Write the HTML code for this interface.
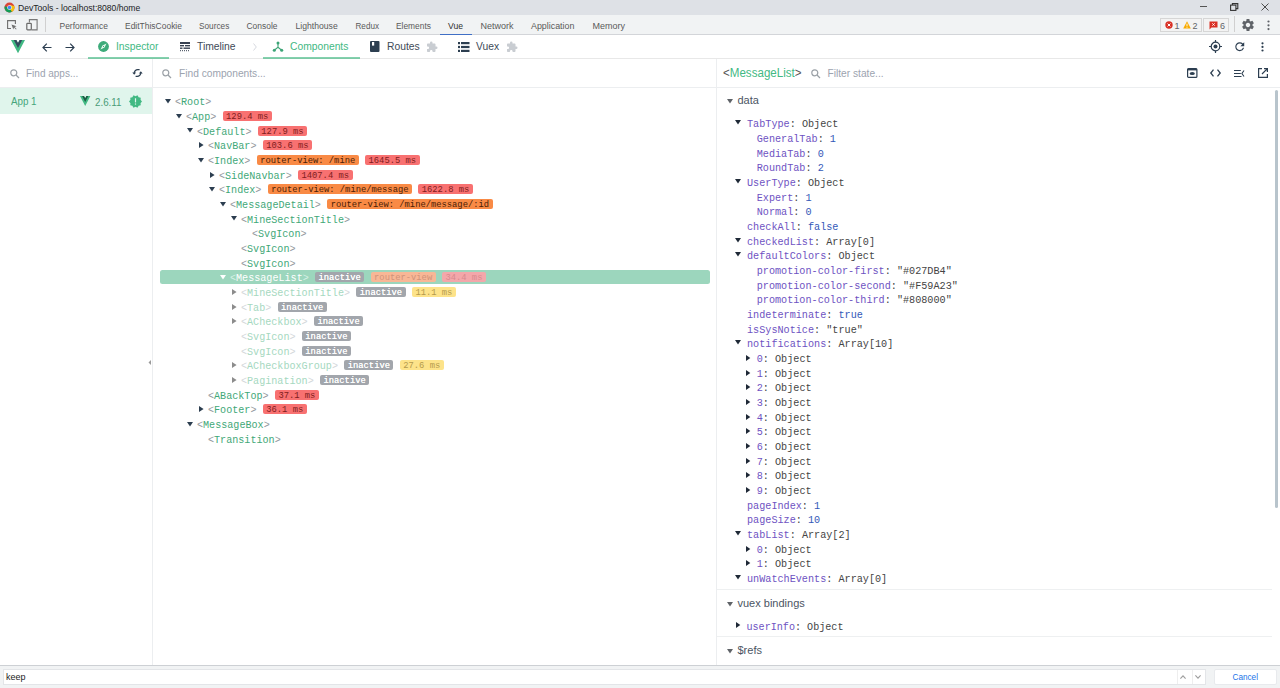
<!DOCTYPE html><html><head><meta charset="utf-8"><style>
*{box-sizing:border-box;margin:0;padding:0}
html,body{width:1280px;height:688px;overflow:hidden;background:#fff;font-family:"Liberation Sans", sans-serif}
.abs{position:absolute}
.t{position:absolute;white-space:pre;line-height:1}
.mono{font-family:"Liberation Mono", monospace}
svg{position:absolute;overflow:visible}
.row{position:absolute;height:14.667px;white-space:pre;font-family:"Liberation Mono", monospace;font-size:10.1px;line-height:14.667px}
.br{color:#a8adb3}
.nm{color:#42b983}
.bd{display:inline-block;height:10px;line-height:13.7px;font-size:8.8px;padding:0 3.5px;border-radius:2px;vertical-align:top;position:relative;top:-0.1px;margin-left:6.3px}
.red.sel{background:#f3a7aa;color:#d98a8e}
.org.sel{background:#f8b796;color:#d0937a}
.gry.sel{background:#a4adb2}
.red{background:#f87171;color:#7f1d1d}
.org{background:#f98a45;color:#4a1d05}
.gry{background:#a2a6ac;color:#fff;line-height:13.4px;text-shadow:0 0 0.3px #fff}
.yel{background:#fde38a;color:#b59a4d}
.tri{position:absolute;width:0;height:0}
.k{color:#6e52c2}
.v{color:#444}
.num{color:#3358b8}
</style></head><body>
<div class="abs" style="left:0;top:0;width:1280px;height:15px;background:#dee1e6"></div>
<svg style="left:4px;top:2px" width="11" height="11" viewBox="0 0 22 22">
<circle cx="11" cy="11" r="10" fill="#db4437"/>
<path d="M11 11 L2.3 16 A10 10 0 0 1 1.3 8.5 Z" fill="#0f9d58"/>
<path d="M11 11 L2.3 16 A10 10 0 0 0 16 19.7 Z" fill="#0f9d58"/>
<path d="M11 11 L16 19.7 A10 10 0 0 0 21 11 L 11 11 Z" fill="#f4c20d"/>
<path d="M11 6 L20.5 8 A10 10 0 0 1 21 11 L16 19.7 Z" fill="#f4c20d"/>
<circle cx="11" cy="11" r="4.6" fill="#fff"/><circle cx="11" cy="11" r="3.6" fill="#4285f4"/></svg>
<div class="t" style="left:18px;top:3.8px;font-size:8.6px;color:#202124">DevTools - localhost:8080/home</div>
<div class="abs" style="left:1200px;top:6px;width:7px;height:1px;background:#555"></div>
<svg style="left:1230px;top:3px" width="9" height="8" viewBox="0 0 9 8"><rect x="0.6" y="2.1" width="5.3" height="5.3" fill="none" stroke="#333" stroke-width="1.1"/><path d="M2.4 2.1 V0.6 H7.8 V5.6 H5.9" fill="none" stroke="#333" stroke-width="1.1"/></svg>
<svg style="left:1261px;top:3px" width="8" height="8" viewBox="0 0 8 8"><path d="M0.5 0.5 L7.5 7.5 M7.5 0.5 L0.5 7.5" stroke="#444" stroke-width="0.95"/></svg>
<div class="abs" style="left:0;top:15px;width:1280px;height:19px;background:#f1f3f4"></div>
<div class="abs" style="left:0;top:34px;width:1280px;height:1px;background:#d3d5d9"></div>
<svg style="left:7px;top:20px" width="10" height="10" viewBox="0 0 10 10"><path d="M4 8.5 H0.6 V0.6 H8.4 V4" fill="none" stroke="#6e6e6e" stroke-width="1.1"/><path d="M4.5 4.5 L9.6 6.3 L7.6 7 L9.6 9 L9 9.6 L7 7.6 L6.3 9.6 Z" fill="#6e6e6e"/></svg>
<svg style="left:26px;top:19px" width="13" height="12" viewBox="0 0 13 12"><path d="M3.4 3.6 V0.6 H11.1 V10.9 H5.3" fill="none" stroke="#777" stroke-width="1.1"/><rect x="0.8" y="4.3" width="4.5" height="6.6" rx="0.8" fill="#f1f3f4" stroke="#6a6a6a" stroke-width="1.2"/></svg>
<div class="abs" style="left:45px;top:17px;width:1px;height:15px;background:#d0d0d0"></div>
<div class="t" style="left:59.5px;top:16.55px;line-height:19px;font-size:8.47px;color:#5a5a5a">Performance</div>
<div class="t" style="left:125px;top:16.55px;line-height:19px;font-size:8.48px;color:#5a5a5a">EditThisCookie</div>
<div class="t" style="left:199px;top:16.55px;line-height:19px;font-size:8.25px;color:#5a5a5a">Sources</div>
<div class="t" style="left:246.5px;top:16.55px;line-height:19px;font-size:8.45px;color:#5a5a5a">Console</div>
<div class="t" style="left:295.5px;top:16.55px;line-height:19px;font-size:8.65px;color:#5a5a5a">Lighthouse</div>
<div class="t" style="left:355.5px;top:16.55px;line-height:19px;font-size:8.15px;color:#5a5a5a">Redux</div>
<div class="t" style="left:396px;top:16.55px;line-height:19px;font-size:8.4px;color:#5a5a5a">Elements</div>
<div class="t" style="left:448px;top:16.55px;line-height:19px;font-size:8.6px;color:#303030">Vue</div>
<div class="t" style="left:480.5px;top:16.55px;line-height:19px;font-size:9.0px;color:#5a5a5a">Network</div>
<div class="t" style="left:531px;top:16.55px;line-height:19px;font-size:8.9px;color:#5a5a5a">Application</div>
<div class="t" style="left:592.5px;top:16.55px;line-height:19px;font-size:9.0px;color:#5a5a5a">Memory</div>
<div class="abs" style="left:440px;top:33.6px;width:32px;height:1.4px;background:#3f6fc6"></div>
<div class="abs" style="left:1160px;top:18px;width:42px;height:13.5px;border:1px solid #d6d6d6;background:#f3f3f3"></div>
<svg style="left:1165px;top:21px" width="8" height="8" viewBox="0 0 8 8"><circle cx="4" cy="4" r="3.7" fill="#d93025"/><path d="M2.6 2.6 L5.4 5.4 M5.4 2.6 L2.6 5.4" stroke="#fff" stroke-width="1"/></svg>
<div class="t" style="left:1174.5px;top:21.5px;font-size:9px;color:#5f6368">1</div>
<svg style="left:1183px;top:21px" width="8" height="8" viewBox="0 0 8 8"><path d="M4 0.3 L7.8 7.4 H0.2 Z" fill="#f9ab00"/><rect x="3.55" y="2.6" width="0.9" height="2.6" fill="#fff"/><rect x="3.55" y="5.8" width="0.9" height="0.9" fill="#fff"/></svg>
<div class="t" style="left:1192.5px;top:21.5px;font-size:9px;color:#5f6368">2</div>
<div class="abs" style="left:1203px;top:18px;width:26px;height:13.5px;border:1px solid #d6d6d6;background:#f3f3f3"></div>
<svg style="left:1209px;top:20.5px" width="9" height="9" viewBox="0 0 9 9"><path d="M0.5 0.5 H8.5 V6.5 H2.5 L0.5 8.5 Z" fill="#d93025"/><path d="M3.3 2.3 L5.7 4.7 M5.7 2.3 L3.3 4.7" stroke="#fff" stroke-width="0.9"/></svg>
<div class="t" style="left:1220px;top:21.5px;font-size:9px;color:#5f6368">6</div>
<div class="abs" style="left:1234px;top:16px;width:1px;height:16px;background:#d0d0d0"></div>
<svg style="left:1241.5px;top:19.3px" width="12" height="12" viewBox="2.3 2.3 19.4 19.4"><path fill="#5f6368" d="M19.14 12.94c.04-.3.06-.61.06-.94 0-.32-.02-.64-.07-.94l2.03-1.58a.49.49 0 0 0 .12-.61l-1.92-3.32a.49.49 0 0 0-.59-.22l-2.39.96c-.5-.38-1.03-.7-1.62-.94l-.36-2.54a.48.48 0 0 0-.48-.41h-3.84c-.24 0-.43.17-.47.41l-.36 2.54c-.59.24-1.13.57-1.62.94l-2.39-.96a.48.48 0 0 0-.59.22L2.74 8.87c-.12.21-.08.47.12.61l2.03 1.58c-.05.3-.09.63-.09.94s.02.64.07.94l-2.03 1.58a.49.49 0 0 0-.12.61l1.92 3.32c.12.22.37.29.59.22l2.39-.96c.5.38 1.03.7 1.62.94l.36 2.54c.05.24.24.41.48.41h3.84c.24 0 .44-.17.47-.41l.36-2.54c.59-.24 1.13-.56 1.62-.94l2.39.96c.22.08.47 0 .59-.22l1.92-3.32c.12-.22.07-.47-.12-.61l-2.01-1.58zM12 15.6c-1.98 0-3.6-1.62-3.6-3.6s1.62-3.6 3.6-3.6 3.6 1.62 3.6 3.6-1.62 3.6-3.6 3.6z"/></svg>
<svg style="left:1267px;top:20px" width="3" height="11" viewBox="0 0 3 11"><circle cx="1.5" cy="1.5" r="1.1" fill="#5f6368"/><circle cx="1.5" cy="5.3" r="1.1" fill="#5f6368"/><circle cx="1.5" cy="9.1" r="1.1" fill="#5f6368"/></svg>
<div class="abs" style="left:0;top:58px;width:1280px;height:1px;background:#e8e8e8"></div>
<svg style="left:11px;top:39.6px" width="14" height="13.2" viewBox="0 0 261.76 226.69" preserveAspectRatio="none"><path d="M161.096.001l-30.225 52.351L100.647.001H-.005l130.877 226.688L261.749.001z" fill="#41b883"/><path d="M161.096.001l-30.225 52.351L100.647.001H52.346l78.526 136.01L209.398.001z" fill="#34495e"/></svg>
<svg style="left:42px;top:42.5px" width="10" height="9" viewBox="0 0 10 9"><path d="M9.5 4.5 H1 M4.8 0.7 L1 4.5 L4.8 8.3" fill="none" stroke="#2c3e50" stroke-width="1.2"/></svg>
<svg style="left:65px;top:42.5px" width="10" height="9" viewBox="0 0 10 9"><path d="M0.5 4.5 H9 M5.2 0.7 L9 4.5 L5.2 8.3" fill="none" stroke="#2c3e50" stroke-width="1.2"/></svg>
<svg style="left:98px;top:41px" width="11" height="11" viewBox="0 0 11 11"><circle cx="5.5" cy="5.5" r="5.4" fill="#3dab7a"/><path d="M8.5 2.5 L6.5 6.5 L2.5 8.5 L4.5 4.5 Z" fill="#e6fbf0"/><circle cx="5.5" cy="5.5" r="0.55" fill="#3a8a66"/></svg>
<div class="t" style="left:116px;top:42px;font-size:10.3px;color:#42b983">Inspector</div>
<div class="abs" style="left:88px;top:56.5px;width:81px;height:2px;background:#42b983;opacity:.65"></div>
<svg style="left:180px;top:41.5px" width="10" height="10" viewBox="0 0 10 10"><rect x="0" y="0" width="10" height="2" fill="#374151"/><rect x="0" y="3" width="4" height="1.4" fill="#374151"/><rect x="5" y="3" width="5" height="1.4" fill="#374151"/><rect x="0" y="5.5" width="2.5" height="1.4" fill="#374151"/><rect x="3.5" y="5.5" width="6.5" height="1.4" fill="#374151"/><path d="M0 8.7 H10" stroke="#374151" stroke-width="1" stroke-dasharray="1 1"/></svg>
<div class="t" style="left:197px;top:42px;font-size:10.3px;color:#404a57">Timeline</div>
<svg style="left:252.5px;top:43px" width="4" height="8" viewBox="0 0 4 8"><path d="M0.5 0.5 L3.3 4 L0.5 7.5" fill="none" stroke="#d1d5db" stroke-width="0.9"/></svg>
<svg style="left:272px;top:41px" width="12" height="11" viewBox="0 0 12 11"><circle cx="6" cy="2" r="1.5" fill="#3ca476"/><circle cx="2.3" cy="9.2" r="1.5" fill="#3ca476"/><circle cx="9.7" cy="9.2" r="1.5" fill="#3ca476"/><path d="M6 2 V6.3 L2.3 9.2 M6 6.3 L9.7 9.2" fill="none" stroke="#3ca476" stroke-width="1.1"/></svg>
<div class="t" style="left:290px;top:42px;font-size:10.3px;color:#42b983">Components</div>
<div class="abs" style="left:262.5px;top:56.5px;width:97px;height:2px;background:#42b983;opacity:.65"></div>
<svg style="left:370px;top:41px" width="10" height="11" viewBox="0 0 10 11"><rect x="0" y="0" width="9.5" height="11" rx="1" fill="#2c3e50"/><rect x="2" y="1" width="2.2" height="3.6" fill="#fff"/></svg>
<div class="t" style="left:387px;top:42px;font-size:10.3px;color:#404a57">Routes</div>
<svg style="left:425.5px;top:40.5px" width="12" height="12" viewBox="0 0 24 24"><path fill="#c9cdd2" d="M20.5 11H19V7c0-1.1-.9-2-2-2h-4V3.5a2.5 2.5 0 0 0-5 0V5H4c-1.1 0-1.99.9-1.99 2v3.8H3.5c1.49 0 2.7 1.21 2.7 2.7s-1.21 2.7-2.7 2.7H2V20c0 1.1.9 2 2 2h3.8v-1.5c0-1.49 1.21-2.7 2.7-2.7 1.49 0 2.7 1.21 2.7 2.7V22H17c1.1 0 2-.9 2-2v-4h1.5a2.5 2.5 0 0 0 0-5z"/></svg>
<svg style="left:457.5px;top:41.5px" width="11.5" height="10" viewBox="0 0 11.5 10"><rect x="0" y="0" width="2" height="2.2" fill="#2c3e50"/><rect x="3" y="0" width="8.5" height="2.2" fill="#2c3e50"/><rect x="0" y="3.9" width="2" height="2.2" fill="#2c3e50"/><rect x="3" y="3.9" width="8.5" height="2.2" fill="#2c3e50"/><rect x="0" y="7.8" width="2" height="2.2" fill="#2c3e50"/><rect x="3" y="7.8" width="8.5" height="2.2" fill="#2c3e50"/></svg>
<div class="t" style="left:476px;top:42px;font-size:10.3px;color:#404a57">Vuex</div>
<svg style="left:505.5px;top:40.5px" width="12" height="12" viewBox="0 0 24 24"><path fill="#c9cdd2" d="M20.5 11H19V7c0-1.1-.9-2-2-2h-4V3.5a2.5 2.5 0 0 0-5 0V5H4c-1.1 0-1.99.9-1.99 2v3.8H3.5c1.49 0 2.7 1.21 2.7 2.7s-1.21 2.7-2.7 2.7H2V20c0 1.1.9 2 2 2h3.8v-1.5c0-1.49 1.21-2.7 2.7-2.7 1.49 0 2.7 1.21 2.7 2.7V22H17c1.1 0 2-.9 2-2v-4h1.5a2.5 2.5 0 0 0 0-5z"/></svg>
<svg style="left:1209px;top:40px" width="13" height="13" viewBox="0 0 13 13"><circle cx="6.5" cy="6.5" r="4.3" fill="none" stroke="#2c3e50" stroke-width="1.2"/><circle cx="6.5" cy="6.5" r="2" fill="#2c3e50"/><path d="M6.5 0 V2.2 M6.5 10.8 V13 M0 6.5 H2.2 M10.8 6.5 H13" stroke="#2c3e50" stroke-width="1.2"/></svg>
<svg style="left:1234.5px;top:41.5px" width="9.5" height="9.5" viewBox="3.5 3.5 17 17"><path fill="#2c3e50" d="M17.65 6.35A7.958 7.958 0 0 0 12 4c-4.42 0-7.99 3.58-7.99 8s3.57 8 7.99 8c3.73 0 6.84-2.55 7.73-6h-2.08A5.99 5.99 0 0 1 12 18c-3.31 0-6-2.69-6-6s2.69-6 6-6c1.66 0 3.14.69 4.22 1.78L13 11h7V4l-2.35 2.35z"/></svg>
<svg style="left:1261px;top:42px" width="3" height="10" viewBox="0 0 3 10"><circle cx="1.5" cy="1.3" r="1.1" fill="#2c3e50"/><circle cx="1.5" cy="4.9" r="1.1" fill="#2c3e50"/><circle cx="1.5" cy="8.5" r="1.1" fill="#2c3e50"/></svg>
<div class="abs" style="left:152px;top:59px;width:1px;height:606px;background:#eceef0"></div>
<div class="abs" style="left:0;top:87px;width:1280px;height:1px;background:#eceef0"></div>
<svg style="left:10px;top:68.5px" width="10" height="10" viewBox="0 0 10 10"><circle cx="3.8" cy="3.8" r="3" fill="none" stroke="#9aa0a6" stroke-width="1.2"/><path d="M6 6 L9 9" stroke="#9aa0a6" stroke-width="1.3"/></svg>
<div class="t" style="left:26px;top:68.5px;font-size:10px;color:#9ca3af">Find apps...</div>
<svg style="left:132px;top:68px" width="11" height="10" viewBox="0 0 11 10"><path d="M2.2 5.4 A3.6 3.6 0 0 1 5.8 1.6 H7.6" fill="none" stroke="#2c3e50" stroke-width="1.2"/><path d="M8.8 4.6 A3.6 3.6 0 0 1 5.2 8.4 H3.6" fill="none" stroke="#2c3e50" stroke-width="1.2"/><path d="M0.3 4.6 L2.2 6.8 L4.1 4.6 Z" fill="#2c3e50"/><path d="M6.9 5.4 L8.8 3.2 L10.7 5.4 Z" fill="#2c3e50"/></svg>
<div class="abs" style="left:0;top:88px;width:152px;height:26px;background:#e0f5ec"></div>
<div class="t" style="left:11px;top:96.9px;font-size:10.3px;color:#45a57b;transform:scaleX(0.95);transform-origin:0 0">App 1</div>
<svg style="left:79.8px;top:95.7px" width="10.4" height="10" viewBox="0 0 261.76 226.69" preserveAspectRatio="none"><path d="M161.096.001l-30.225 52.351L100.647.001H-.005l130.877 226.688L261.749.001z" fill="#42b983"/><path d="M161.096.001l-30.225 52.351L100.647.001H52.346l78.526 136.01L209.398.001z" fill="#1e5b45"/></svg>
<div class="t" style="left:94.5px;top:96.6px;font-size:10.5px;color:#4a9c77;transform:scaleX(0.933);transform-origin:0 0">2.6.11</div>
<svg style="left:128.6px;top:94.6px" width="13" height="13" viewBox="1 1 22 22"><path fill="#42b983" d="M23 12l-2.44-2.78.34-3.68-3.61-.82-1.89-3.18L12 3 8.6 1.54 6.71 4.72l-3.61.81.34 3.68L1 12l2.44 2.78-.34 3.69 3.61.82 1.89 3.18L12 21l3.4 1.46 1.89-3.18 3.61-.82-.34-3.68L23 12z"/><rect x="11" y="6.5" width="2" height="7" fill="#e0f5ec"/><rect x="11" y="15.3" width="2" height="2" fill="#e0f5ec"/></svg>
<div class="abs" style="left:716px;top:59px;width:1px;height:606px;background:#eceef0"></div>
<svg style="left:162px;top:68.5px" width="10" height="10" viewBox="0 0 10 10"><circle cx="3.8" cy="3.8" r="3" fill="none" stroke="#9aa0a6" stroke-width="1.2"/><path d="M6 6 L9 9" stroke="#9aa0a6" stroke-width="1.3"/></svg>
<div class="t" style="left:179px;top:68.5px;font-size:10.2px;color:#9ca3af">Find components...</div>
<svg style="left:148px;top:360px" width="3" height="5" viewBox="0 0 3 5"><path d="M3 0 V5 L0.5 2.5 Z" fill="#9a9a9a"/></svg>
<svg style="left:165.00px;top:99.00px" width="6" height="5" viewBox="0 0 6 5"><path d="M0 0 H6 L3 4.6 Z" fill="#2c3e50"/></svg>
<div class="row" style="left:175px;top:96.30px"><span style="color:#92979c">&lt;</span><span style="color:#3fa878">Root</span><span style="color:#92979c">&gt;</span></div>
<svg style="left:176.00px;top:113.67px" width="6" height="5" viewBox="0 0 6 5"><path d="M0 0 H6 L3 4.6 Z" fill="#2c3e50"/></svg>
<div class="row" style="left:186px;top:110.97px"><span style="color:#92979c">&lt;</span><span style="color:#3fa878">App</span><span style="color:#92979c">&gt;</span><span class="bd red">129.4 ms</span></div>
<svg style="left:187.00px;top:128.33px" width="6" height="5" viewBox="0 0 6 5"><path d="M0 0 H6 L3 4.6 Z" fill="#2c3e50"/></svg>
<div class="row" style="left:197px;top:125.63px"><span style="color:#92979c">&lt;</span><span style="color:#3fa878">Default</span><span style="color:#92979c">&gt;</span><span class="bd red">127.9 ms</span></div>
<svg style="left:199.00px;top:142.30px" width="5" height="6" viewBox="0 0 5 6"><path d="M0 0 V6 L4.6 3 Z" fill="#2c3e50"/></svg>
<div class="row" style="left:208px;top:140.30px"><span style="color:#92979c">&lt;</span><span style="color:#3fa878">NavBar</span><span style="color:#92979c">&gt;</span><span class="bd red">103.6 ms</span></div>
<svg style="left:198.00px;top:157.67px" width="6" height="5" viewBox="0 0 6 5"><path d="M0 0 H6 L3 4.6 Z" fill="#2c3e50"/></svg>
<div class="row" style="left:208px;top:154.97px"><span style="color:#92979c">&lt;</span><span style="color:#3fa878">Index</span><span style="color:#92979c">&gt;</span><span class="bd org">router-view: /mine</span><span class="bd red">1645.5 ms</span></div>
<svg style="left:210.00px;top:171.63px" width="5" height="6" viewBox="0 0 5 6"><path d="M0 0 V6 L4.6 3 Z" fill="#2c3e50"/></svg>
<div class="row" style="left:219px;top:169.63px"><span style="color:#92979c">&lt;</span><span style="color:#3fa878">SideNavbar</span><span style="color:#92979c">&gt;</span><span class="bd red">1407.4 ms</span></div>
<svg style="left:209.00px;top:187.00px" width="6" height="5" viewBox="0 0 6 5"><path d="M0 0 H6 L3 4.6 Z" fill="#2c3e50"/></svg>
<div class="row" style="left:219px;top:184.30px"><span style="color:#92979c">&lt;</span><span style="color:#3fa878">Index</span><span style="color:#92979c">&gt;</span><span class="bd org">router-view: /mine/message</span><span class="bd red">1622.8 ms</span></div>
<svg style="left:220.00px;top:201.67px" width="6" height="5" viewBox="0 0 6 5"><path d="M0 0 H6 L3 4.6 Z" fill="#2c3e50"/></svg>
<div class="row" style="left:230px;top:198.97px"><span style="color:#92979c">&lt;</span><span style="color:#3fa878">MessageDetail</span><span style="color:#92979c">&gt;</span><span class="bd org">router-view: /mine/message/:id</span></div>
<svg style="left:231.00px;top:216.34px" width="6" height="5" viewBox="0 0 6 5"><path d="M0 0 H6 L3 4.6 Z" fill="#2c3e50"/></svg>
<div class="row" style="left:241px;top:213.64px"><span style="color:#92979c">&lt;</span><span style="color:#3fa878">MineSectionTitle</span><span style="color:#92979c">&gt;</span></div>
<div class="row" style="left:252px;top:228.30px"><span style="color:#92979c">&lt;</span><span style="color:#3fa878">SvgIcon</span><span style="color:#92979c">&gt;</span></div>
<div class="row" style="left:241px;top:242.97px"><span style="color:#92979c">&lt;</span><span style="color:#3fa878">SvgIcon</span><span style="color:#92979c">&gt;</span></div>
<div class="row" style="left:241px;top:257.64px"><span style="color:#92979c">&lt;</span><span style="color:#3fa878">SvgIcon</span><span style="color:#92979c">&gt;</span></div>
<div class="abs" style="left:159.5px;top:270.40px;width:550.5px;height:13.5px;border-radius:2.5px;background:#9cd6bd"></div>
<svg style="left:220.00px;top:275.00px" width="6" height="5" viewBox="0 0 6 5"><path d="M0 0 H6 L3 4.6 Z" fill="#fff"/></svg>
<div class="row" style="left:230px;top:272.30px"><span style="color:#d5f0e4">&lt;</span><span style="color:#fff">MessageList</span><span style="color:#d5f0e4">&gt;</span><span class="bd gry">inactive</span><span class="bd org sel">router-view</span><span class="bd red sel">34.4 ms</span></div>
<svg style="left:232.00px;top:288.97px" width="5" height="6" viewBox="0 0 5 6"><path d="M0 0 V6 L4.6 3 Z" fill="#8c8c8c"/></svg>
<div class="row" style="left:241px;top:286.97px"><span style="color:#d3d7da">&lt;</span><span style="color:#a5d8c0">MineSectionTitle</span><span style="color:#d3d7da">&gt;</span><span class="bd gry">inactive</span><span class="bd yel">11.1 ms</span></div>
<svg style="left:232.00px;top:303.64px" width="5" height="6" viewBox="0 0 5 6"><path d="M0 0 V6 L4.6 3 Z" fill="#8c8c8c"/></svg>
<div class="row" style="left:241px;top:301.64px"><span style="color:#d3d7da">&lt;</span><span style="color:#a5d8c0">Tab</span><span style="color:#d3d7da">&gt;</span><span class="bd gry">inactive</span></div>
<svg style="left:232.00px;top:318.31px" width="5" height="6" viewBox="0 0 5 6"><path d="M0 0 V6 L4.6 3 Z" fill="#8c8c8c"/></svg>
<div class="row" style="left:241px;top:316.31px"><span style="color:#d3d7da">&lt;</span><span style="color:#a5d8c0">ACheckbox</span><span style="color:#d3d7da">&gt;</span><span class="bd gry">inactive</span></div>
<div class="row" style="left:241px;top:330.97px"><span style="color:#d3d7da">&lt;</span><span style="color:#a5d8c0">SvgIcon</span><span style="color:#d3d7da">&gt;</span><span class="bd gry">inactive</span></div>
<div class="row" style="left:241px;top:345.64px"><span style="color:#d3d7da">&lt;</span><span style="color:#a5d8c0">SvgIcon</span><span style="color:#d3d7da">&gt;</span><span class="bd gry">inactive</span></div>
<svg style="left:232.00px;top:362.31px" width="5" height="6" viewBox="0 0 5 6"><path d="M0 0 V6 L4.6 3 Z" fill="#8c8c8c"/></svg>
<div class="row" style="left:241px;top:360.31px"><span style="color:#d3d7da">&lt;</span><span style="color:#a5d8c0">ACheckboxGroup</span><span style="color:#d3d7da">&gt;</span><span class="bd gry">inactive</span><span class="bd yel">27.6 ms</span></div>
<svg style="left:232.00px;top:376.97px" width="5" height="6" viewBox="0 0 5 6"><path d="M0 0 V6 L4.6 3 Z" fill="#8c8c8c"/></svg>
<div class="row" style="left:241px;top:374.97px"><span style="color:#d3d7da">&lt;</span><span style="color:#a5d8c0">Pagination</span><span style="color:#d3d7da">&gt;</span><span class="bd gry">inactive</span></div>
<div class="row" style="left:208px;top:389.64px"><span style="color:#92979c">&lt;</span><span style="color:#3fa878">ABackTop</span><span style="color:#92979c">&gt;</span><span class="bd red">37.1 ms</span></div>
<svg style="left:199.00px;top:406.31px" width="5" height="6" viewBox="0 0 5 6"><path d="M0 0 V6 L4.6 3 Z" fill="#2c3e50"/></svg>
<div class="row" style="left:208px;top:404.31px"><span style="color:#92979c">&lt;</span><span style="color:#3fa878">Footer</span><span style="color:#92979c">&gt;</span><span class="bd red">36.1 ms</span></div>
<svg style="left:187.00px;top:421.67px" width="6" height="5" viewBox="0 0 6 5"><path d="M0 0 H6 L3 4.6 Z" fill="#2c3e50"/></svg>
<div class="row" style="left:197px;top:418.97px"><span style="color:#92979c">&lt;</span><span style="color:#3fa878">MessageBox</span><span style="color:#92979c">&gt;</span></div>
<div class="row" style="left:208px;top:433.64px"><span style="color:#92979c">&lt;</span><span style="color:#3fa878">Transition</span><span style="color:#92979c">&gt;</span></div>
<div class="t" style="left:723px;top:66.9px;font-size:12px;color:#333;transform:scaleX(0.965);transform-origin:0 0"><span style="color:#555">&lt;</span><span style="color:#42b983">MessageList</span><span style="color:#555">&gt;</span></div>
<svg style="left:811px;top:68.5px" width="10" height="10" viewBox="0 0 10 10"><circle cx="3.8" cy="3.8" r="3" fill="none" stroke="#9aa0a6" stroke-width="1.2"/><path d="M6 6 L9 9" stroke="#9aa0a6" stroke-width="1.3"/></svg>
<div class="t" style="left:827.5px;top:68.5px;font-size:10.2px;color:#9ca3af">Filter state...</div>
<svg style="left:1187px;top:68px" width="10.5" height="10" viewBox="0 0 10.5 10"><rect x="0.6" y="0.6" width="9.3" height="8.8" rx="1" fill="none" stroke="#2c3e50" stroke-width="1.2"/><rect x="0.6" y="0.6" width="9.3" height="1.8" fill="#2c3e50"/><ellipse cx="5.25" cy="5.6" rx="2.6" ry="1.5" fill="#2c3e50"/></svg>
<svg style="left:1210px;top:69px" width="11" height="8" viewBox="0 0 11 8"><path d="M3.5 0.7 L0.8 4 L3.5 7.3 M7.5 0.7 L10.2 4 L7.5 7.3" fill="none" stroke="#2c3e50" stroke-width="1.3"/></svg>
<svg style="left:1234px;top:69px" width="10.5" height="8" viewBox="0 0 10.5 8"><path d="M0 1.5 H6.8 M0 4.5 H6.8 M0 7.5 H7.5 M10 1.5 L7.9 4.5 L10 7.5" fill="none" stroke="#2c3e50" stroke-width="1.1"/></svg>
<svg style="left:1257.5px;top:68px" width="10" height="10" viewBox="0 0 10 10"><path d="M4 0.6 H0.6 V9.4 H9.4 V6" fill="none" stroke="#2c3e50" stroke-width="1.2"/><path d="M6 0.6 H9.4 V4 M9.4 0.6 L4 6" fill="none" stroke="#2c3e50" stroke-width="1.2"/></svg>
<div class="abs" style="left:1274.8px;top:90px;width:3.3px;height:417.5px;background:#b8c4cc;border-radius:1.5px"></div>
<svg style="left:726.5px;top:99.20px" width="6" height="4.5" viewBox="0 0 6 4.5"><path d="M0 0 H6 L3 4.5 Z" fill="#5f6368"/></svg>
<div class="t" style="left:737.5px;top:95.30px;font-size:11px;color:#4b5563">data</div>
<svg style="left:734.90px;top:120.27px" width="6" height="5" viewBox="0 0 6 5"><path d="M0 0 H6 L3 4.6 Z" fill="#1f2937"/></svg>
<div class="row" style="left:747.00px;top:118.37px;font-size:10.16px"><span class="k">TabType</span><span class="v">: </span><span class="v">Object</span></div>
<div class="row" style="left:756.70px;top:133.04px;font-size:10.16px"><span class="k">GeneralTab</span><span class="v">: </span><span class="num">1</span></div>
<div class="row" style="left:756.70px;top:147.70px;font-size:10.16px"><span class="k">MediaTab</span><span class="v">: </span><span class="num">0</span></div>
<div class="row" style="left:756.70px;top:162.37px;font-size:10.16px"><span class="k">RoundTab</span><span class="v">: </span><span class="num">2</span></div>
<svg style="left:734.90px;top:178.94px" width="6" height="5" viewBox="0 0 6 5"><path d="M0 0 H6 L3 4.6 Z" fill="#1f2937"/></svg>
<div class="row" style="left:747.00px;top:177.04px;font-size:10.16px"><span class="k">UserType</span><span class="v">: </span><span class="v">Object</span></div>
<div class="row" style="left:756.70px;top:191.70px;font-size:10.16px"><span class="k">Expert</span><span class="v">: </span><span class="num">1</span></div>
<div class="row" style="left:756.70px;top:206.37px;font-size:10.16px"><span class="k">Normal</span><span class="v">: </span><span class="num">0</span></div>
<div class="row" style="left:747.00px;top:221.04px;font-size:10.16px"><span class="k">checkAll</span><span class="v">: </span><span class="num">false</span></div>
<svg style="left:734.90px;top:237.61px" width="6" height="5" viewBox="0 0 6 5"><path d="M0 0 H6 L3 4.6 Z" fill="#1f2937"/></svg>
<div class="row" style="left:747.00px;top:235.71px;font-size:10.16px"><span class="k">checkedList</span><span class="v">: </span><span class="v">Array[0]</span></div>
<svg style="left:734.90px;top:252.27px" width="6" height="5" viewBox="0 0 6 5"><path d="M0 0 H6 L3 4.6 Z" fill="#1f2937"/></svg>
<div class="row" style="left:747.00px;top:250.37px;font-size:10.16px"><span class="k">defaultColors</span><span class="v">: </span><span class="v">Object</span></div>
<div class="row" style="left:756.70px;top:265.04px;font-size:10.16px"><span class="k">promotion-color-first</span><span class="v">: </span><span class="v">"#027DB4"</span></div>
<div class="row" style="left:756.70px;top:279.71px;font-size:10.16px"><span class="k">promotion-color-second</span><span class="v">: </span><span class="v">"#F59A23"</span></div>
<div class="row" style="left:756.70px;top:294.37px;font-size:10.16px"><span class="k">promotion-color-third</span><span class="v">: </span><span class="v">"#808000"</span></div>
<div class="row" style="left:747.00px;top:309.04px;font-size:10.16px"><span class="k">indeterminate</span><span class="v">: </span><span class="num">true</span></div>
<div class="row" style="left:747.00px;top:323.71px;font-size:10.16px"><span class="k">isSysNotice</span><span class="v">: </span><span class="v">"true"</span></div>
<svg style="left:734.90px;top:340.28px" width="6" height="5" viewBox="0 0 6 5"><path d="M0 0 H6 L3 4.6 Z" fill="#1f2937"/></svg>
<div class="row" style="left:747.00px;top:338.38px;font-size:10.16px"><span class="k">notifications</span><span class="v">: </span><span class="v">Array[10]</span></div>
<svg style="left:746.20px;top:355.14px" width="5" height="6" viewBox="0 0 5 6"><path d="M0 0 V6 L4.3 3 Z" fill="#1f2937"/></svg>
<div class="row" style="left:756.70px;top:353.04px;font-size:10.16px"><span class="k">0</span><span class="v">: </span><span class="v">Object</span></div>
<svg style="left:746.20px;top:369.81px" width="5" height="6" viewBox="0 0 5 6"><path d="M0 0 V6 L4.3 3 Z" fill="#1f2937"/></svg>
<div class="row" style="left:756.70px;top:367.71px;font-size:10.16px"><span class="k">1</span><span class="v">: </span><span class="v">Object</span></div>
<svg style="left:746.20px;top:384.48px" width="5" height="6" viewBox="0 0 5 6"><path d="M0 0 V6 L4.3 3 Z" fill="#1f2937"/></svg>
<div class="row" style="left:756.70px;top:382.38px;font-size:10.16px"><span class="k">2</span><span class="v">: </span><span class="v">Object</span></div>
<svg style="left:746.20px;top:399.14px" width="5" height="6" viewBox="0 0 5 6"><path d="M0 0 V6 L4.3 3 Z" fill="#1f2937"/></svg>
<div class="row" style="left:756.70px;top:397.04px;font-size:10.16px"><span class="k">3</span><span class="v">: </span><span class="v">Object</span></div>
<svg style="left:746.20px;top:413.81px" width="5" height="6" viewBox="0 0 5 6"><path d="M0 0 V6 L4.3 3 Z" fill="#1f2937"/></svg>
<div class="row" style="left:756.70px;top:411.71px;font-size:10.16px"><span class="k">4</span><span class="v">: </span><span class="v">Object</span></div>
<svg style="left:746.20px;top:428.48px" width="5" height="6" viewBox="0 0 5 6"><path d="M0 0 V6 L4.3 3 Z" fill="#1f2937"/></svg>
<div class="row" style="left:756.70px;top:426.38px;font-size:10.16px"><span class="k">5</span><span class="v">: </span><span class="v">Object</span></div>
<svg style="left:746.20px;top:443.14px" width="5" height="6" viewBox="0 0 5 6"><path d="M0 0 V6 L4.3 3 Z" fill="#1f2937"/></svg>
<div class="row" style="left:756.70px;top:441.04px;font-size:10.16px"><span class="k">6</span><span class="v">: </span><span class="v">Object</span></div>
<svg style="left:746.20px;top:457.81px" width="5" height="6" viewBox="0 0 5 6"><path d="M0 0 V6 L4.3 3 Z" fill="#1f2937"/></svg>
<div class="row" style="left:756.70px;top:455.71px;font-size:10.16px"><span class="k">7</span><span class="v">: </span><span class="v">Object</span></div>
<svg style="left:746.20px;top:472.48px" width="5" height="6" viewBox="0 0 5 6"><path d="M0 0 V6 L4.3 3 Z" fill="#1f2937"/></svg>
<div class="row" style="left:756.70px;top:470.38px;font-size:10.16px"><span class="k">8</span><span class="v">: </span><span class="v">Object</span></div>
<svg style="left:746.20px;top:487.15px" width="5" height="6" viewBox="0 0 5 6"><path d="M0 0 V6 L4.3 3 Z" fill="#1f2937"/></svg>
<div class="row" style="left:756.70px;top:485.05px;font-size:10.16px"><span class="k">9</span><span class="v">: </span><span class="v">Object</span></div>
<div class="row" style="left:747.00px;top:499.71px;font-size:10.16px"><span class="k">pageIndex</span><span class="v">: </span><span class="num">1</span></div>
<div class="row" style="left:747.00px;top:514.38px;font-size:10.16px"><span class="k">pageSize</span><span class="v">: </span><span class="num">10</span></div>
<svg style="left:734.90px;top:530.95px" width="6" height="5" viewBox="0 0 6 5"><path d="M0 0 H6 L3 4.6 Z" fill="#1f2937"/></svg>
<div class="row" style="left:747.00px;top:529.05px;font-size:10.16px"><span class="k">tabList</span><span class="v">: </span><span class="v">Array[2]</span></div>
<svg style="left:746.20px;top:545.81px" width="5" height="6" viewBox="0 0 5 6"><path d="M0 0 V6 L4.3 3 Z" fill="#1f2937"/></svg>
<div class="row" style="left:756.70px;top:543.71px;font-size:10.16px"><span class="k">0</span><span class="v">: </span><span class="v">Object</span></div>
<svg style="left:746.20px;top:560.48px" width="5" height="6" viewBox="0 0 5 6"><path d="M0 0 V6 L4.3 3 Z" fill="#1f2937"/></svg>
<div class="row" style="left:756.70px;top:558.38px;font-size:10.16px"><span class="k">1</span><span class="v">: </span><span class="v">Object</span></div>
<svg style="left:734.90px;top:574.95px" width="6" height="5" viewBox="0 0 6 5"><path d="M0 0 H6 L3 4.6 Z" fill="#1f2937"/></svg>
<div class="row" style="left:747.00px;top:573.05px;font-size:10.16px"><span class="k">unWatchEvents</span><span class="v">: </span><span class="v">Array[0]</span></div>
<div class="abs" style="left:717px;top:589px;width:555px;height:1px;background:#eef0f1"></div>
<svg style="left:726.5px;top:601.70px" width="6" height="4.5" viewBox="0 0 6 4.5"><path d="M0 0 H6 L3 4.5 Z" fill="#5f6368"/></svg>
<div class="t" style="left:737.5px;top:597.80px;font-size:11px;color:#4b5563">vuex bindings</div>
<svg style="left:736px;top:622.20px" width="5" height="6" viewBox="0 0 5 6"><path d="M0 0 V6 L4.3 3 Z" fill="#1f2937"/></svg>
<div class="row" style="left:746.5px;top:620.57px"><span class="k">userInfo</span><span class="v">: </span><span class="v">Object</span></div>
<div class="abs" style="left:717px;top:636px;width:555px;height:1px;background:#eef0f1"></div>
<svg style="left:726.5px;top:649.20px" width="6" height="4.5" viewBox="0 0 6 4.5"><path d="M0 0 H6 L3 4.5 Z" fill="#5f6368"/></svg>
<div class="t" style="left:737.5px;top:645.30px;font-size:11px;color:#4b5563">$refs</div>
<div class="abs" style="left:0;top:665px;width:1280px;height:23px;background:#f1f3f4;border-top:1px solid #cdd0d4"></div>
<div class="abs" style="left:3px;top:668.5px;width:1203px;height:16px;background:#fff;border:1px solid #e3e5e8"></div>
<div class="t" style="left:6px;top:672.5px;font-size:9px;color:#222">keep</div>
<div class="abs" style="left:1177px;top:670px;width:1px;height:14px;background:#eee"></div>
<div class="abs" style="left:1191.5px;top:670px;width:1px;height:14px;background:#eee"></div>
<svg style="left:1180px;top:674.5px" width="6" height="4" viewBox="0 0 6 4"><path d="M0.4 3.6 L3 0.8 L5.6 3.6" fill="none" stroke="#9e9e9e" stroke-width="1.1"/></svg>
<svg style="left:1195px;top:674.5px" width="6" height="4" viewBox="0 0 6 4"><path d="M0.4 0.4 L3 3.2 L5.6 0.4" fill="none" stroke="#9e9e9e" stroke-width="1.1"/></svg>
<div class="abs" style="left:1213.5px;top:669px;width:63px;height:15.5px;background:#fff;border:1px solid #e8eaed;border-radius:2px"></div>
<div class="t" style="left:1232.5px;top:673.5px;font-size:8.2px;color:#1a73e8">Cancel</div>
</body></html>
